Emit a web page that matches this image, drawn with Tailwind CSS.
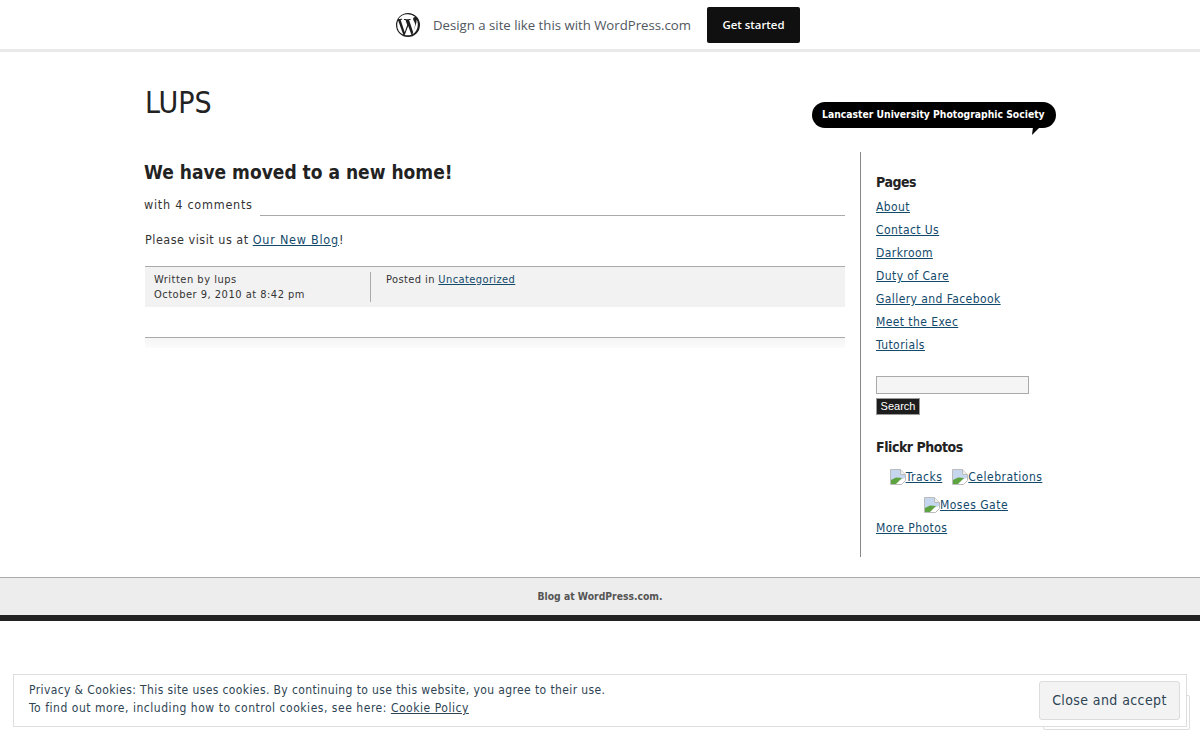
<!DOCTYPE html>
<html lang="en">
<head>
    <meta charset="UTF-8">
    <title>LUPS</title>
    <script src="https://cdn.jsdelivr.net/npm/@tailwindcss/browser@4"></script>
</head>
<body class="bg-white h-[740px] overflow-hidden relative font-['DejaVu_Sans',sans-serif] font-stretch-condensed text-[#333]">

<!-- top banner -->
<div class="h-[52px] bg-white border-b-[3px] border-[#e9e9e9] flex items-start justify-center pt-[7px] pr-1 font-['Open_Sans',sans-serif] font-stretch-normal">
    <svg class="w-6 h-6 mt-[6px]" viewBox="0 0 24 24" fill="#1d1d1d"><path d="M12 0a12 12 0 1 0 0 24 12 12 0 0 0 0-24zm0 1.2a10.8 10.8 0 0 1 7.3 2.85c-.1 0-.2-.01-.3-.01-1.1 0-1.9.96-1.9 2 0 .93.54 1.72 1.1 2.65.43.75.93 1.7.93 3.1 0 .96-.37 2.08-.86 3.63l-1.12 3.75-4.07-12.1c.68-.04 1.29-.11 1.29-.11.6-.07.53-.96-.08-.93 0 0-1.83.15-3 .15-1.1 0-2.96-.15-2.96-.15-.6-.03-.68.9-.07.93 0 0 .58.07 1.19.11l1.76 4.83-2.48 7.43L4.6 6.8c.68-.04 1.29-.11 1.29-.11.6-.07.53-.96-.08-.93 0 0-1.83.15-3 .15h-.42A10.8 10.8 0 0 1 12 1.2zM1.2 12c0-1.57.34-3.06.94-4.4l5.15 14.12A10.8 10.8 0 0 1 1.2 12zm10.98.94 3.16 8.66.07.15a10.8 10.8 0 0 1-6.64.17l3.41-8.98zm8.7-5.76c.6 1.1.92 2.3.92 4.82 0 3.98-2.16 7.46-5.37 9.33l3.3-9.53c.61-1.54.82-2.77.82-3.87 0-.4-.03-.77-.07-1.12z"/></svg>
    <span class="ml-[13px] mt-[8px] text-[13.2px] leading-5 text-[#50575e]">Design a site like this with WordPress.com</span>
    <a class="ml-4 w-[93px] h-9 bg-[#101010] rounded-[2px] text-white text-[11.4px] font-semibold flex items-center justify-center">Get started</a>
</div>

<div class="w-[912px] ml-[144px]">
    <!-- header -->
    <div class="h-[100px] flex justify-between relative">
        <h1 class="ml-px mt-[33px] text-[30px] leading-9 text-[#222] font-normal">LUPS</h1>
        <div class="relative mt-[50px] w-[244px] h-[26px] bg-black rounded-[13px] text-white text-[10.3px] font-bold whitespace-nowrap leading-[25px] pl-[10px]">
            Lancaster University Photographic Society
            <svg class="absolute left-[220px] top-[25px] w-2 h-[8px]" viewBox="0 0 8 8" fill="#000"><path d="M1 0h7L0 8z"/></svg>
        </div>
    </div>

    <div class="flex">
        <!-- post -->
        <div class="w-[701px] shrink-0">
            <h2 class="mt-[7px] text-[19px] leading-[26px] font-bold text-[#222]">We have moved to a new home!</h2>
            <div class="mt-[11px] flex items-start text-[12.5px] leading-[18px] text-[#333]">
                <span class="tracking-[0.75px]">with 4 comments</span>
                <div class="flex-1 ml-[7px] h-[20px] border-b border-[#aaa]"></div>
            </div>
            <p class="mt-[15px] ml-px text-[12.5px] leading-[18px] tracking-[0.5px]">Please visit us at <a class="underline text-[#134a6b] tracking-[0.75px]">Our New Blog</a>!</p>
            <div class="mt-[17px] ml-px h-[41px] bg-[#f2f2f2] border-t border-[#aaa] flex pt-[5px] text-[11px] leading-[15px] tracking-[0.5px]">
                <div class="w-[226px] h-[30px] pl-[9px] border-r border-[#aaa]">Written by lups<br>October 9, 2010 at 8:42 pm</div>
                <div class="pl-[15px] tracking-[0.4px]">Posted in <a class="underline text-[#134a6b]">Uncategorized</a></div>
            </div>
            <div class="mt-[30px] ml-px h-[11px] border-t border-[#aaa] bg-gradient-to-b from-[#f5f5f5] to-[#fbfbfb]"></div>
        </div>

        <!-- sidebar -->
        <div class="ml-[15px] w-[196px] h-[405px] border-l border-[#888] pl-[15px] pt-[21px] text-[12px] tracking-[0.42px]">
            <h3 class="text-[14px] leading-[18px] font-bold text-[#222] tracking-[-0.45px]">Pages</h3>
            <ul class="mt-[5px] leading-[23px] text-[#134a6b]">
                <li><a class="underline">About</a></li>
                <li><a class="underline">Contact Us</a></li>
                <li><a class="underline">Darkroom</a></li>
                <li><a class="underline">Duty of Care</a></li>
                <li><a class="underline">Gallery and Facebook</a></li>
                <li><a class="underline">Meet the Exec</a></li>
                <li><a class="underline">Tutorials</a></li>
            </ul>
            <input type="text" class="block mt-[19px] w-[153px] h-[18px] bg-[#f5f5f5] border border-[#aaa]">
            <button class="block mt-[4px] w-[44px] h-[17px] bg-[#1d1d1d] border border-[#999] text-white text-[11px] leading-[13px] tracking-normal font-['Liberation_Sans',sans-serif] font-stretch-normal">Search</button>
            <h3 class="mt-[23px] text-[14px] leading-[18px] font-bold text-[#222] tracking-[-0.45px]">Flickr Photos</h3>
            <div class="mt-[13px] flex justify-center gap-[10px] text-[#134a6b] leading-4 tracking-[0.5px]">
                <a class="underline flex"><svg class="w-4 h-4 shrink-0" viewBox="0 0 16 16"><path d="M.5.5h10l5 5v6l-4 4H.5z" fill="#fff" stroke="#bbb"/><path d="M1 1h9v5h5v3L1 14z" fill="#c6d6ee"/><path d="M1 15v-4l5-2.500 6 .5-6 6z" fill="#5da33f"/><path d="M10.500.5v5h5" fill="#eee" stroke="#bbb"/></svg>Tracks</a>
                <a class="underline flex"><svg class="w-4 h-4 shrink-0" viewBox="0 0 16 16"><path d="M.5.5h10l5 5v6l-4 4H.5z" fill="#fff" stroke="#bbb"/><path d="M1 1h9v5h5v3L1 14z" fill="#c6d6ee"/><path d="M1 15v-4l5-2.500 6 .5-6 6z" fill="#5da33f"/><path d="M10.500.5v5h5" fill="#eee" stroke="#bbb"/></svg>Celebrations</a>
            </div>
            <div class="mt-[12px] flex justify-center text-[#134a6b] leading-4 tracking-[0.5px]">
                <a class="underline flex"><svg class="w-4 h-4 shrink-0" viewBox="0 0 16 16"><path d="M.5.5h10l5 5v6l-4 4H.5z" fill="#fff" stroke="#bbb"/><path d="M1 1h9v5h5v3L1 14z" fill="#c6d6ee"/><path d="M1 15v-4l5-2.500 6 .5-6 6z" fill="#5da33f"/><path d="M10.500.5v5h5" fill="#eee" stroke="#bbb"/></svg>Moses Gate</a>
            </div>
            <a class="block mt-[7px] leading-4 underline text-[#134a6b]">More Photos</a>
        </div>
    </div>
</div>

<!-- footer -->
<div class="mt-[20px] h-[44px] bg-[#ededed] border-t border-[#aaa] border-b-[6px] border-b-[#222] text-center text-[10.3px] leading-[37px] font-bold text-[#555]">Blog at WordPress.com.</div>

<!-- widget peeking out from behind the cookie bar -->
<div class="absolute left-[1043px] top-[695px] w-[147px] h-[35px] bg-white border border-[#ddd] rounded-[2px]"></div>

<!-- cookie bar -->
<div class="absolute left-[13px] top-[674px] w-[1174px] h-[53px] bg-white border border-[#dedede] pl-[15px] pr-[6px] flex items-center justify-between text-[12px] leading-[18px] tracking-[0.39px] text-[#2e4453]">
    <div class="-mt-[3px]">Privacy &amp; Cookies: This site uses cookies. By continuing to use this website, you agree to their use.<br><span class="tracking-[0.53px]">To find out more, including how to control cookies, see here: <a class="underline">Cookie Policy</a></span></div>
    <button class="w-[141px] h-[39px] bg-[#f3f3f3] border border-[#dcdcde] rounded-[3px] text-[14px] pb-px tracking-[0.4px] text-[#2e4453]">Close and accept</button>
</div>

</body>
</html>
